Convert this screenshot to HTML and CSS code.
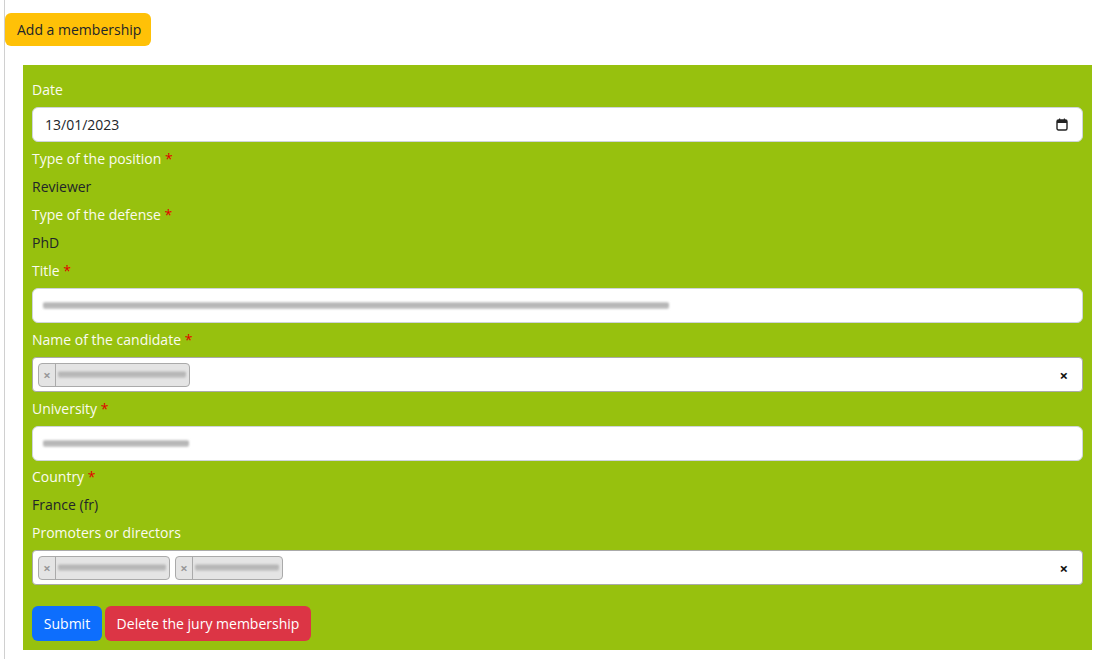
FILE: index.html
```html
<!DOCTYPE html>
<html lang="en">
<head>
<meta charset="utf-8">
<title>Jury membership</title>
<link rel="stylesheet" href="styles.css">
</head>
<body>
<div class="page">
  <button class="btn btn-warning">Add a membership</button>
  <form class="card">
    <div class="label label-ctl">Date</div>
    <div class="control date">
      <span>13/01/2023</span>
      <svg class="cal" width="12" height="13" viewBox="0 0 12 13"><rect x="1" y="2" width="10" height="10" rx="1.5" fill="none" stroke="#222" stroke-width="1.4"/><rect x="1" y="2" width="10" height="3" fill="#222"/><rect x="3" y="0.5" width="1.2" height="2" fill="#222"/><rect x="7.8" y="0.5" width="1.2" height="2" fill="#222"/></svg>
    </div>
    <div class="label">Type of the position <span class="req">*</span></div>
    <div class="value">Reviewer</div>
    <div class="label">Type of the defense <span class="req">*</span></div>
    <div class="value">PhD</div>
    <div class="label label-ctl">Title <span class="req">*</span></div>
    <div class="control"><span class="blur" style="width:626px"></span></div>
    <div class="label label-ctl">Name of the candidate <span class="req">*</span></div>
    <div class="control select">
      <span class="tag"><span class="tag-x">×</span><span class="blur" style="width:128px"></span></span>
      <span class="clear">×</span>
    </div>
    <div class="label label-ctl">University <span class="req">*</span></div>
    <div class="control tight"><span class="blur" style="width:146px"></span></div>
    <div class="label">Country <span class="req">*</span></div>
    <div class="value">France (fr)</div>
    <div class="label label-ctl">Promoters or directors</div>
    <div class="control select">
      <span class="tag"><span class="tag-x">×</span><span class="blur" style="width:108px"></span></span>
      <span class="tag"><span class="tag-x">×</span><span class="blur" style="width:84px"></span></span>
      <span class="clear">×</span>
    </div>
    <div class="actions">
      <button type="button" class="btn btn-primary">Submit</button>
      <button type="button" class="btn btn-danger">Delete the jury membership</button>
    </div>
  </form>
</div>
</body>
</html>
```
FILE: styles.css
```css
html, body {
  margin: 0;
  padding: 0;
  background: #fff;
  font-family: "Open Sans", "Noto Sans", sans-serif;
  font-size: 14px;
  color: #212529;
}
.page {
  margin-left: 4px;
  border-left: 1px solid #d0d0d0;
  min-height: 659px;
  padding-top: 13px;
  box-sizing: border-box;
}
.btn {
  font-family: inherit;
  font-size: 14px;
  height: 33px;
  padding: 0 12px;
  border: 0;
  border-radius: 6px;
  cursor: pointer;
  line-height: 33px;
  white-space: nowrap;
}
.btn-warning {
  background: #ffc107;
  color: #212529;
  display: block;
  padding: 0 10px 0 12px;
}
.card {
  margin: 19px 7px 0 18px;
  background: #97c10e;
  padding: 13px 9px 9px 9px;
  display: flex;
  flex-direction: column;
}
.label {
  color: #fbfbf0;
  line-height: 24px;
  height: 24px;
  margin-bottom: 4px;
}
.label-ctl {
  margin-bottom: 5px;
}
.req {
  color: #e00000;
}
.value {
  line-height: 24px;
  height: 24px;
  margin-bottom: 4px;
  color: #212529;
}
.control {
  height: 35px;
  box-sizing: border-box;
  background: #fff;
  border: 1px solid #ced4da;
  border-radius: 6px;
  margin-bottom: 5px;
  display: flex;
  align-items: center;
  padding: 0 10px;
}
.control.tight {
  margin-bottom: 4px;
}
.date {
  justify-content: space-between;
  padding: 0 14px 0 12px;
}
.cal {
  display: block;
}
.blur {
  display: inline-block;
  height: 7px;
  background: linear-gradient(180deg, #d0d0d0, #a8a8a8 45%, #c8c8c8 60%, #b4b4b4 80%, #d8d8d8);
  filter: blur(1.2px);
  border-radius: 2px;
}
.select {
  border-color: #aaa;
  border-radius: 4px;
  padding: 0 5px;
  gap: 5px;
}
.tag {
  height: 24px;
  box-sizing: border-box;
  background: #e4e4e4;
  border: 1px solid #aaa;
  border-radius: 4px;
  display: flex;
  align-items: center;
  padding-right: 3px;
}
.tag-x {
  width: 16px;
  height: 22px;
  border-right: 1px solid #aaa;
  color: #999;
  font-size: 13px;
  line-height: 22px;
  text-align: center;
  font-weight: bold;
  margin-right: 2px;
}
.clear {
  margin-left: auto;
  margin-right: 9px;
  font-weight: bold;
  font-size: 15px;
  color: #111;
}
.actions {
  display: flex;
  gap: 3px;
  margin-top: 16px;
}
.btn-primary {
  background: #0d6efd;
  color: #fff;
  height: 35px;
  width: 70px;
  padding: 0;
}
.btn-danger {
  background: #dc3545;
  color: #fff;
  height: 35px;
  width: 206px;
  padding: 0;
}
```
